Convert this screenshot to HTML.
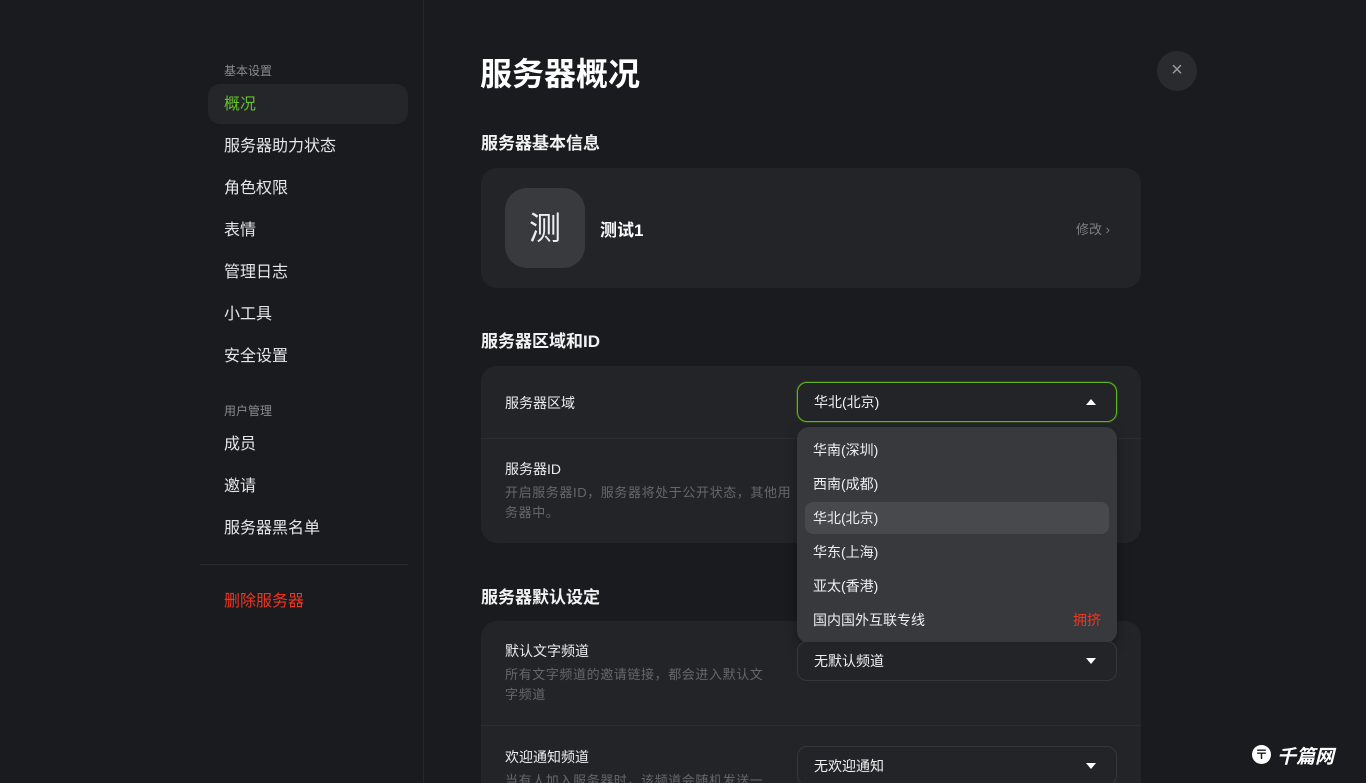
<!DOCTYPE html>
<html><head><meta charset="utf-8"><style>
*{margin:0;padding:0;box-sizing:border-box}
html,body{width:1366px;height:783px;overflow:hidden}
body{background:#1a1b1e;font-family:"Liberation Sans","Noto Sans CJK SC",sans-serif;color:#e8e8ea;position:relative}
.a{position:absolute;white-space:nowrap}
.side{left:0;top:0;width:424px;height:783px;border-right:1px solid #25262a}
.nav{left:208px;width:200px;height:40px;line-height:42px;padding-left:16px;font-size:16px;color:#e6e6e8}
.lab{left:224px;font-size:12px;color:#8a8b8f}
.card{background:#232428;border-radius:16px;left:481px;width:660px}
.h2{left:481px;font-size:17px;font-weight:bold;color:#f2f2f2}
.sel{left:797px;width:320px;height:40px;border-radius:10px;border:1px solid #36373b;background:#232428;font-size:14px;line-height:38px;padding-left:16px;color:#f0f0f0}
.tri{position:absolute;right:20px;top:16px;width:0;height:0;border-left:5px solid transparent;border-right:5px solid transparent;border-top:6px solid #fff}
.lbl{left:505px;font-size:14px;color:#ececee}
.desc{left:505px;font-size:13px;color:#66676b;line-height:20px;letter-spacing:0.6px}
.it{left:813px;font-size:14px;color:#eeeef0}
</style></head><body>
<div class="a side"></div>
<div class="a lab" style="top:62px">基本设置</div>
<div class="a nav" style="top:84px;background:#25262a;border-radius:12px;color:#62c02a">概况</div>
<div class="a nav" style="top:126px">服务器助力状态</div>
<div class="a nav" style="top:168px">角色权限</div>
<div class="a nav" style="top:210px">表情</div>
<div class="a nav" style="top:252px">管理日志</div>
<div class="a nav" style="top:294px">小工具</div>
<div class="a nav" style="top:336px">安全设置</div>
<div class="a lab" style="top:402px">用户管理</div>
<div class="a nav" style="top:424px">成员</div>
<div class="a nav" style="top:466px">邀请</div>
<div class="a nav" style="top:508px">服务器黑名单</div>
<div class="a" style="left:200px;top:564px;width:208px;height:1px;background:#2a2b2f"></div>
<div class="a nav" style="top:581px;color:#f0341e">删除服务器</div>

<div class="a" style="left:480px;top:49px;font-size:32px;font-weight:bold;color:#fff">服务器概况</div>
<div class="a" style="left:1157px;top:51px;width:40px;height:40px;border-radius:50%;background:#2a2b2f;color:#9a9b9f;font-size:20px;text-align:center;line-height:38px">×</div>

<div class="a h2" style="top:129px">服务器基本信息</div>
<div class="a card" style="top:168px;height:120px"></div>
<div class="a" style="left:505px;top:188px;width:80px;height:80px;border-radius:22px;background:#393a3e;color:#eee;font-size:32px;text-align:center;line-height:80px">测</div>
<div class="a" style="left:600px;top:216px;font-size:17px;font-weight:bold;color:#fff">测试1</div>
<div class="a" style="left:1076px;top:219px;font-size:13px;color:#7e7f83">修改 ›</div>

<div class="a h2" style="top:327px">服务器区域和ID</div>
<div class="a card" style="top:366px;height:177px"></div>
<div class="a" style="left:481px;top:438px;width:660px;height:1px;background:#2c2d31"></div>
<div class="a lbl" style="top:393px">服务器区域</div>
<div class="a sel" style="top:382px;border:1.5px solid #5fb526;box-shadow:0 0 0 1px #2d4a18">华北(北京)<div class="tri" style="border-top:none;border-bottom:6px solid #fff"></div></div>
<div class="a lbl" style="top:459px">服务器ID</div>
<div class="a desc" style="top:483px">开启服务器ID，服务器将处于公开状态，其他用<br>务器中。</div>

<div class="a" style="left:797px;top:427px;width:320px;height:216px;background:#38393d;border-radius:12px;box-shadow:0 4px 12px rgba(0,0,0,.35)"></div>
<div class="a" style="left:805px;top:502px;width:304px;height:32px;background:#48494d;border-radius:8px"></div>
<div class="a it" style="top:440px">华南(深圳)</div>
<div class="a it" style="top:474px">西南(成都)</div>
<div class="a it" style="top:508px">华北(北京)</div>
<div class="a it" style="top:542px">华东(上海)</div>
<div class="a it" style="top:576px">亚太(香港)</div>
<div class="a it" style="top:610px">国内国外互联专线</div>
<div class="a" style="left:1073px;top:610px;font-size:14px;color:#f0341e">拥挤</div>

<div class="a h2" style="top:583px">服务器默认设定</div>
<div class="a card" style="top:621px;height:162px;z-index:-1;border-radius:16px 16px 0 0"></div>
<div class="a" style="left:481px;top:725px;width:660px;height:1px;background:#2c2d31"></div>
<div class="a lbl" style="top:641px">默认文字频道</div>
<div class="a desc" style="top:665px">所有文字频道的邀请链接，都会进入默认文<br>字频道</div>
<div class="a sel" style="top:641px">无默认频道<div class="tri"></div></div>
<div class="a lbl" style="top:747px">欢迎通知频道</div>
<div class="a desc" style="top:771px">当有人加入服务器时，该频道会随机发送一</div>
<div class="a sel" style="top:746px">无欢迎通知<div class="tri"></div></div>

<div class="a" style="left:1252px;top:745px;width:19px;height:19px;border-radius:50%;background:#fff;color:#1a1b1e;font-size:13px;font-weight:bold;text-align:center;line-height:19px">〒</div>
<div class="a" style="left:1277px;top:742px;font-size:19px;font-weight:bold;font-style:italic;color:#fff">千篇网</div>
</body></html>
